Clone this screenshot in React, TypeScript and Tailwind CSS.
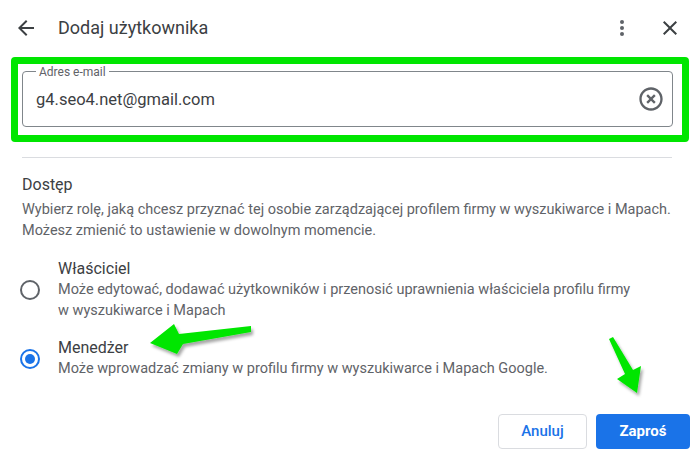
import React from "react";

function Radio({ checked }: { checked?: boolean }) {
  return (
    <div
      className={
        checked
          ? "ml-[-2px] mr-[18px] flex h-[20px] w-[20px] shrink-0 items-center justify-center rounded-full border-2 border-[#1a73e8]"
          : "ml-[-2px] mr-[18px] flex h-[20px] w-[20px] shrink-0 items-center justify-center rounded-full border-2 border-[#5f6368]"
      }
    >
      {checked && <div className="h-[10px] w-[10px] rounded-full bg-[#1a73e8]" />}
    </div>
  );
}

export default function App() {
  return (
    <div
      className="relative h-[456px] w-[694px] overflow-hidden bg-white"
      style={{ fontFamily: "Roboto, 'Liberation Sans', sans-serif" }}
    >
      {/* Header */}
      <div className="flex h-[56px] items-center pl-[14px] pr-[12px]">
        <svg width="24" height="24" viewBox="0 0 24 24" fill="#3c4043">
          <path d="M20 11H7.83l5.59-5.59L12 4l-8 8 8 8 1.41-1.41L7.83 13H20v-2z" />
        </svg>
        <div className="ml-[20px] text-[18px] leading-[24px] text-[#3c4043]">Dodaj użytkownika</div>
        <div className="flex-1" />
        <svg width="24" height="24" viewBox="0 0 24 24" fill="#5f6368">
          <circle cx="12" cy="6" r="2" />
          <circle cx="12" cy="12" r="2" />
          <circle cx="12" cy="18" r="2" />
        </svg>
        <svg className="ml-[24px]" width="24" height="24" viewBox="0 0 24 24" fill="#3c4043">
          <path d="M19 6.41L17.59 5 12 10.59 6.41 5 5 6.41 10.59 12 5 17.59 6.41 19 12 13.41 17.59 19 19 17.59 13.41 12z" />
        </svg>
      </div>

      {/* Highlighted input */}
      <div className="ml-[11px] mt-[1px] h-[85px] w-[678px] rounded-[4px] border-[7px] border-[#00e600] pl-[4px] pr-[9px] pt-[7px]">
        <div className="relative flex h-[56px] items-center rounded-[4px] border border-[#80868b] pl-[13px] pr-[7px]">
          <div className="absolute left-[13px] top-[-8px] bg-white px-[3px] text-[12px] leading-[16px] text-[#5f6368]">
            Adres e-mail
          </div>
          <div className="flex-1 pt-[1px] text-[16.5px] leading-[24px] text-[#3c4043]">g4.seo4.net@gmail.com</div>
          <svg width="28" height="28" viewBox="0 0 24 24" fill="#5f6368">
            <path d="M14.59 8L12 10.59 9.41 8 8 9.41 10.59 12 8 14.59 9.41 16 12 13.41 14.59 16 16 14.59 13.41 12 16 9.41 14.59 8zM12 2C6.47 2 2 6.47 2 12s4.47 10 10 10 10-4.47 10-10S17.53 2 12 2zm0 18c-4.41 0-8-3.59-8-8s3.59-8 8-8 8 3.59 8 8-3.59 8-8 8z" />
          </svg>
        </div>
      </div>

      {/* Divider */}
      <div className="mx-[22px] mt-[15px] h-px bg-[#dadce0]" />

      {/* Access section */}
      <div className="px-[22px]">
        <div className="mt-[15px] text-[16px] leading-[24px] text-[#3c4043]">Dostęp</div>
        <div className="mt-[2px] whitespace-nowrap text-[14.5px] leading-[21px] text-[#5f6368]">
          Wybierz rolę, jaką chcesz przyznać tej osobie zarządzającej profilem firmy w wyszukiwarce i Mapach.
          <br />
          Możesz zmienić to ustawienie w dowolnym momencie.
        </div>

        <div className="mt-[18px] flex items-center">
          <Radio />
          <div>
            <div className="text-[16px] leading-[20px] text-[#3c4043]">Właściciel</div>
            <div className="whitespace-nowrap text-[14.5px] leading-[21px] text-[#5f6368]">
              Może edytować, dodawać użytkowników i przenosić uprawnienia właściciela profilu firmy
              <br />
              w wyszukiwarce i Mapach
            </div>
          </div>
        </div>

        <div className="mt-[17px] flex items-center">
          <Radio checked />
          <div>
            <div className="text-[16px] leading-[20px] text-[#3c4043]">Menedżer</div>
            <div className="whitespace-nowrap text-[14.5px] leading-[21px] text-[#5f6368]">
              Może wprowadzać zmiany w profilu firmy w wyszukiwarce i Mapach Google.
            </div>
          </div>
        </div>
      </div>

      {/* Buttons */}
      <div className="mt-[35px] flex justify-end gap-[9px] pr-[4px]">
        <button className="h-[35px] w-[89px] rounded-[4px] border border-[#dadce0] bg-white text-[15px] font-medium text-[#1a73e8]">
          Anuluj
        </button>
        <button className="h-[35px] w-[94px] rounded-[4px] bg-[#1a73e8] text-[15px] font-bold text-white">
          Zaproś
        </button>
      </div>

      {/* Annotation arrows */}
      <svg className="pointer-events-none absolute left-0 top-0" width="694" height="456">
        <defs>
          <filter id="sh" x="-20%" y="-20%" width="140%" height="140%">
            <feDropShadow dx="2" dy="3" stdDeviation="1.5" floodColor="#000" floodOpacity="0.35" />
          </filter>
        </defs>
        <polygon
          points="150,343 174,324 179,334 251,326 251,332 183,344 177,354"
          fill="#00e600"
          filter="url(#sh)"
        />
        <polygon
          points="609,339 613,337 633,370 641,366 637,393 617,379 625,374"
          fill="#00e600"
          filter="url(#sh)"
        />
      </svg>
    </div>
  );
}
